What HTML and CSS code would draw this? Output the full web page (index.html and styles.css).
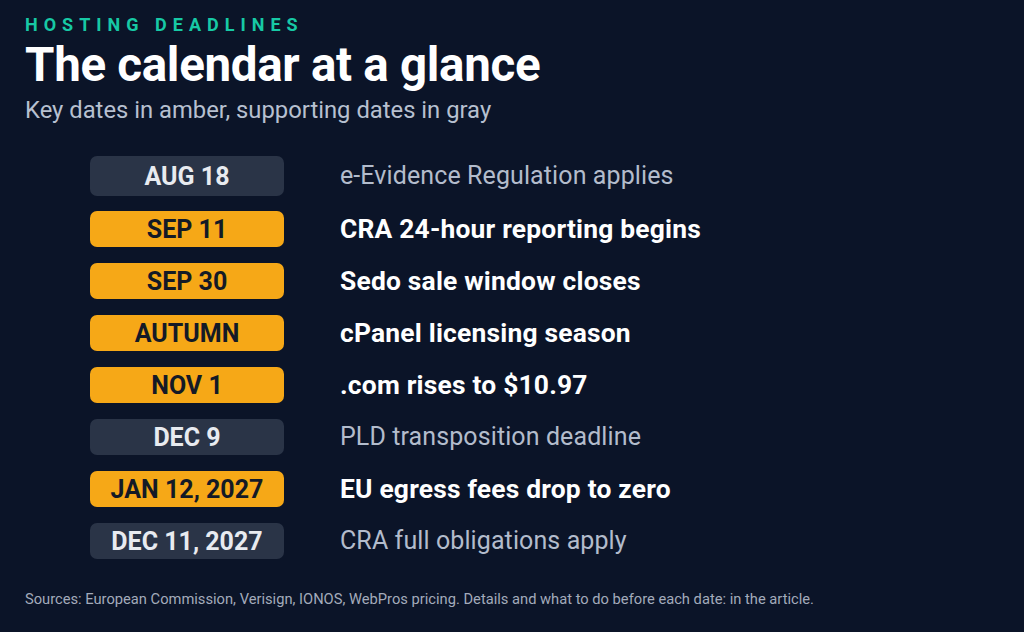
FILE: index.html
```html
<!DOCTYPE html>
<html lang="en">
<head>
<meta charset="utf-8">
<title>Hosting deadlines</title>
<link rel="stylesheet" href="styles.css">
</head>
<body>
<main class="page">
  <header class="head">
    <div class="eyebrow">HOSTING DEADLINES</div>
    <h1 class="title">The calendar at a glance</h1>
    <p class="subtitle">Key dates in amber, supporting dates in gray</p>
  </header>
  <ul class="rows">
    <li class="row row-first"><span class="pill pill-gray pill-tall">AUG 18</span><span class="desc desc-gray">e-Evidence Regulation applies</span></li>
    <li class="row"><span class="pill pill-amber">SEP 11</span><span class="desc desc-key">CRA 24-hour reporting begins</span></li>
    <li class="row"><span class="pill pill-amber">SEP 30</span><span class="desc desc-key">Sedo sale window closes</span></li>
    <li class="row"><span class="pill pill-amber">AUTUMN</span><span class="desc desc-key">cPanel licensing season</span></li>
    <li class="row"><span class="pill pill-amber">NOV 1</span><span class="desc desc-key">.com rises to $10.97</span></li>
    <li class="row"><span class="pill pill-gray">DEC 9</span><span class="desc desc-gray">PLD transposition deadline</span></li>
    <li class="row"><span class="pill pill-amber">JAN 12, 2027</span><span class="desc desc-key">EU egress fees drop to zero</span></li>
    <li class="row"><span class="pill pill-gray">DEC 11, 2027</span><span class="desc desc-gray">CRA full obligations apply</span></li>
  </ul>
  <footer class="sources">Sources: European Commission, Verisign, IONOS, WebPros pricing. Details and what to do before each date: in the article.</footer>
</main>
</body>
</html>
```

FILE: styles.css
```css
* { box-sizing: border-box; }
html, body {
  margin: 0;
  padding: 0;
  background: #0b1428;
}
body {
  width: 1024px;
  height: 632px;
  overflow: hidden;
  font-family: Roboto, "Liberation Sans", Arial, sans-serif;
  color: #ffffff;
}
.page {
  padding: 14px 0 0 25px;
  display: flex;
  flex-direction: column;
  height: 632px;
}
.head {
  display: flex;
  flex-direction: column;
}
.eyebrow {
  font-size: 18px;
  font-weight: 700;
  letter-spacing: 6px;
  color: #17c9a5;
  line-height: 22px;
}
.title {
  margin: 4px 0 0 0;
  font-size: 47.5px;
  font-weight: 700;
  line-height: 50px;
  letter-spacing: -0.3px;
  color: #ffffff;
}
.subtitle {
  margin: 5px 0 0 0;
  font-size: 23.8px;
  line-height: 30px;
  color: #b7c0d0;
}
.rows {
  list-style: none;
  margin: 24px 0 0 0;
  padding: 0 0 0 65px;
  display: flex;
  flex-direction: column;
}
.row {
  display: flex;
  align-items: center;
  height: 52px;
  gap: 56px;
}
.row-first {
  height: 54px;
}
.pill {
  width: 194px;
  height: 36px;
  border-radius: 7px;
  display: flex;
  align-items: center;
  justify-content: center;
  font-size: 25px;
  font-weight: 700;
  flex: none;
}
.pill-tall {
  height: 40px;
}
.pill-gray {
  background: #2a3447;
  color: #e8ebf0;
}
.pill-amber {
  background: #f6a817;
  color: #141a26;
}
.desc {
  line-height: 32px;
}
.desc-key {
  font-size: 26.4px;
  letter-spacing: 0.2px;
  font-weight: 700;
  color: #ffffff;
}
.desc-gray {
  font-size: 25px;
  letter-spacing: 0.1px;
  color: #b3bccc;
}
.sources {
  margin-top: 24px;
  font-size: 14.7px;
  line-height: 17px;
  color: #a3abbb;
}
```
